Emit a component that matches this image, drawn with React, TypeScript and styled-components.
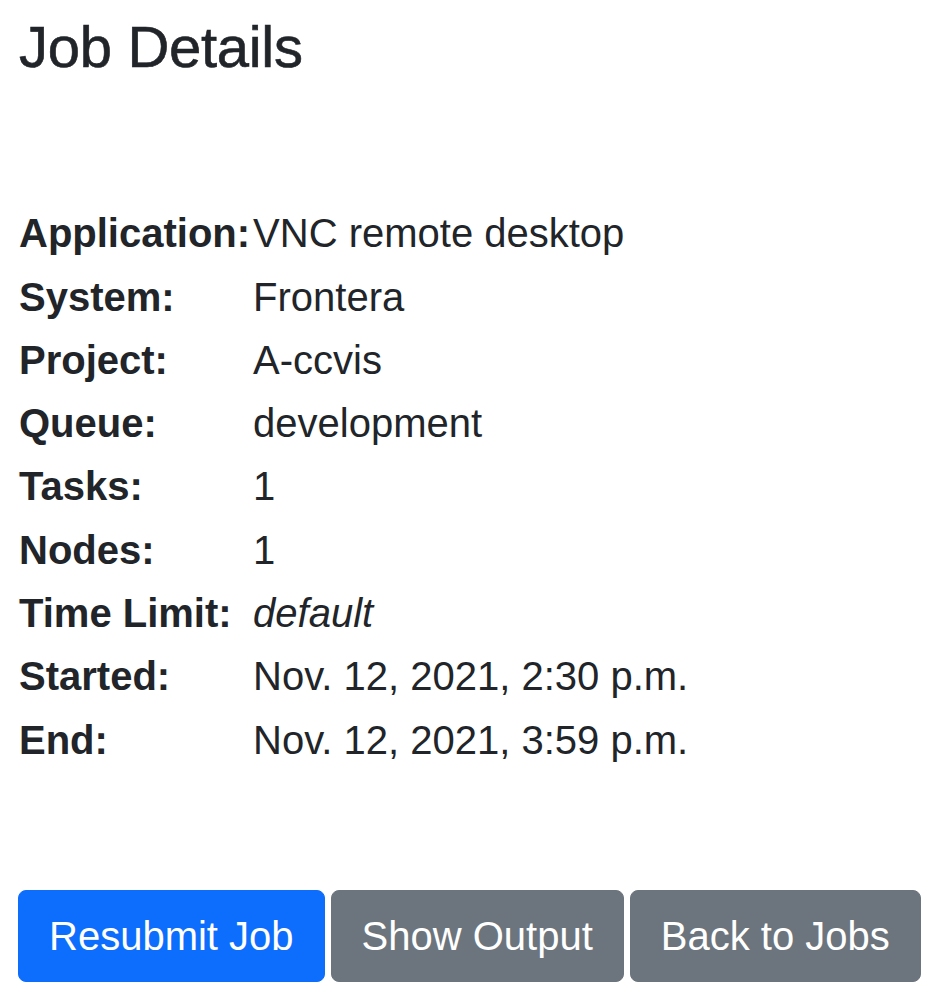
import React from "react";
import styled, { createGlobalStyle } from "styled-components";

const Global = createGlobalStyle`
  html, body { margin: 0; padding: 0; background: #ffffff; }
  body { font-family: "Liberation Sans", Arial, sans-serif; color: #212529; }
`;

const Page = styled.div`
  padding: 12px 18px 0 19px;
  display: flex;
  flex-direction: column;
`;

const Title = styled.h2`
  margin: 0;
  font-size: 58px;
  font-weight: 400;
  line-height: 1.2;
  letter-spacing: -0.3px;
  -webkit-text-stroke: 0.6px #212529;
`;

const Details = styled.dl`
  margin: 120px 0 0 0;
  display: grid;
  grid-template-columns: max-content 1fr;
  grid-auto-rows: 63.3px;
  column-gap: 3px;
  align-items: center;
  font-size: 40px;
  line-height: 1.5;
`;

const Label = styled.dt`
  font-weight: 700;
  margin: 0;
`;

const Value = styled.dd<{ $italic?: boolean }>`
  margin: 0;
  font-style: ${(p) => (p.$italic ? "italic" : "normal")};
`;

const Actions = styled.div`
  margin-top: 119px;
  display: flex;
  gap: 6px;
  margin-left: -1px;
`;

const Button = styled.button<{ $variant: "primary" | "secondary" }>`
  height: 92px;
  padding: 0 30px;
  border-radius: 8px;
  border: 1px solid ${(p) => (p.$variant === "primary" ? "#0d6efd" : "#6c757d")};
  background: ${(p) => (p.$variant === "primary" ? "#0d6efd" : "#6c757d")};
  color: #ffffff;
  font-family: "Liberation Sans", Arial, sans-serif;
  font-size: 40px;
  line-height: 1.5;
  cursor: pointer;
`;

const rows: { label: string; value: string; italic?: boolean }[] = [
  { label: "Application:", value: "VNC remote desktop" },
  { label: "System:", value: "Frontera" },
  { label: "Project:", value: "A-ccvis" },
  { label: "Queue:", value: "development" },
  { label: "Tasks:", value: "1" },
  { label: "Nodes:", value: "1" },
  { label: "Time Limit:", value: "default", italic: true },
  { label: "Started:", value: "Nov. 12, 2021, 2:30 p.m." },
  { label: "End:", value: "Nov. 12, 2021, 3:59 p.m." },
];

export default function App() {
  return (
    <>
      <Global />
      <Page>
        <Title>Job Details</Title>
        <Details>
          {rows.map((r) => (
            <React.Fragment key={r.label}>
              <Label>{r.label}</Label>
              <Value $italic={r.italic}>{r.value}</Value>
            </React.Fragment>
          ))}
        </Details>
        <Actions>
          <Button $variant="primary">Resubmit Job</Button>
          <Button $variant="secondary">Show Output</Button>
          <Button $variant="secondary">Back to Jobs</Button>
        </Actions>
      </Page>
    </>
  );
}
